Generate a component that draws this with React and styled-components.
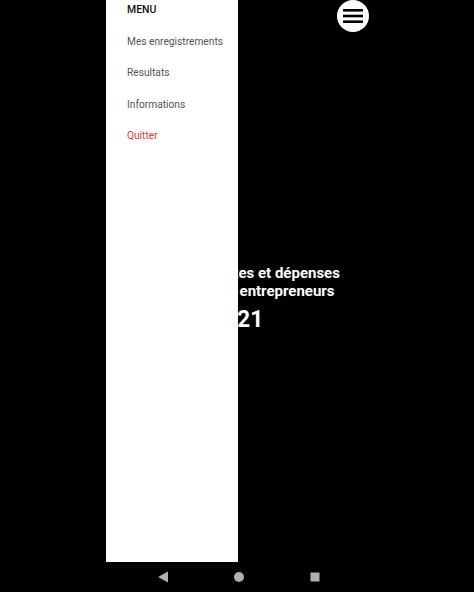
import React from "react";
import styled, { createGlobalStyle } from "styled-components";

const GlobalStyle = createGlobalStyle`
  html, body {
    margin: 0;
    padding: 0;
    background: #000;
    font-family: Roboto, "Liberation Sans", sans-serif;
  }
`;

const menuItems = [
  { label: "Mes enregistrements" },
  { label: "Resultats" },
  { label: "Informations" },
  { label: "Quitter", danger: true },
];

function App() {
  return (
    <Screen>
      <GlobalStyle />
      <Main>
        <Header>
          <MenuButton aria-label="menu">
            <svg width="20" height="16" viewBox="0 0 20 16">
              <rect x="0" y="1" width="20" height="2.6" fill="#000" />
              <rect x="0" y="6.7" width="20" height="2.6" fill="#000" />
              <rect x="0" y="12.4" width="20" height="2.6" fill="#000" />
            </svg>
          </MenuButton>
        </Header>
        <Title>
          <Line>Suivi des recettes et dépenses</Line>
          <Line>pour les petits entrepreneurs</Line>
          <Year>2021</Year>
        </Title>
        <Drawer>
          <DrawerTitle>MENU</DrawerTitle>
          {menuItems.map(({ label, danger }) => (
            <MenuItem key={label} $danger={danger}>
              {label}
            </MenuItem>
          ))}
        </Drawer>
      </Main>
      <NavBar>
        <svg width="12" height="12" viewBox="0 0 12 12">
          <polygon points="11,0.5 11,11.5 1,6" fill="#b0b0b0" />
        </svg>
        <svg width="12" height="12" viewBox="0 0 12 12">
          <circle cx="6" cy="6" r="5" fill="#b0b0b0" />
        </svg>
        <svg width="12" height="12" viewBox="0 0 12 12">
          <rect x="1.5" y="1.5" width="9" height="9" fill="#b0b0b0" />
        </svg>
      </NavBar>
    </Screen>
  );
}

const Screen = styled.div`
  width: 474px;
  height: 592px;
  display: flex;
  flex-direction: column;
  background: #000;
  overflow: hidden;
`;

const Main = styled.div`
  position: relative;
  flex: 1;
  display: flex;
  flex-direction: column;
`;

const Header = styled.div`
  display: flex;
  justify-content: flex-end;
  padding: 0 105px 0 0;
  height: 33px;
`;

const MenuButton = styled.button`
  width: 32px;
  height: 32px;
  border-radius: 50%;
  border: none;
  padding: 0;
  background: #fff;
  display: flex;
  align-items: center;
  justify-content: center;
`;

const Title = styled.div`
  display: flex;
  flex-direction: column;
  align-items: center;
  margin-top: 231px;
  color: #fff;
  font-weight: 700;
  text-align: center;
  white-space: nowrap;
`;

const Line = styled.div`
  font-size: 15px;
  line-height: 18px;
`;

const Year = styled.div`
  font-size: 23px;
  line-height: 28px;
  margin-top: 6px;
`;

const Drawer = styled.nav`
  position: absolute;
  top: 0;
  left: 106px;
  width: 132px;
  height: 100%;
  background: #fff;
  box-shadow: 1px 0 2px rgba(0, 0, 0, 0.25);
  display: flex;
  flex-direction: column;
  padding: 3px 0 0 21px;
  box-sizing: border-box;
`;

const DrawerTitle = styled.div`
  font-size: 10.5px;
  font-weight: 500;
  color: #111;
  line-height: 14px;
  margin-bottom: 14px;
`;

const MenuItem = styled.div`
  font-size: 10.2px;
  line-height: 14px;
  color: ${(p) => (p.$danger ? "#e53935" : "#555")};
  padding: 3.5px 0 14px;
`;

const NavBar = styled.div`
  height: 30px;
  display: flex;
  align-items: center;
  justify-content: center;
  gap: 64px;
  padding-left: 4px;
`;

export default App;
